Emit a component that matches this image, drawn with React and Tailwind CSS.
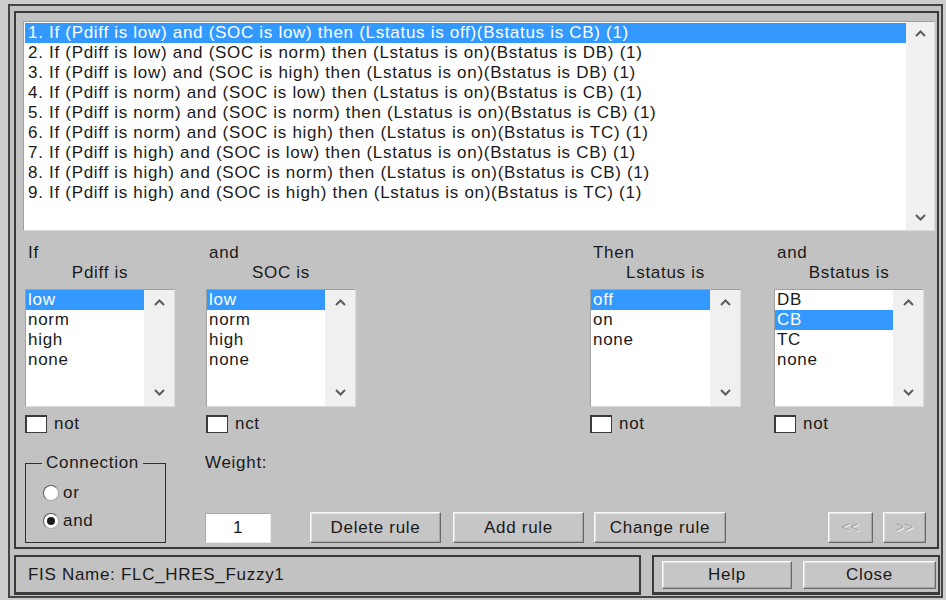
const rules = [
  '1. If (Pdiff is low) and (SOC is low) then (Lstatus is off)(Bstatus is CB) (1)',
  '2. If (Pdiff is low) and (SOC is norm) then (Lstatus is on)(Bstatus is DB) (1)',
  '3. If (Pdiff is low) and (SOC is high) then (Lstatus is on)(Bstatus is DB) (1)',
  '4. If (Pdiff is norm) and (SOC is low) then (Lstatus is on)(Bstatus is CB) (1)',
  '5. If (Pdiff is norm) and (SOC is norm) then (Lstatus is on)(Bstatus is CB) (1)',
  '6. If (Pdiff is norm) and (SOC is high) then (Lstatus is on)(Bstatus is TC) (1)',
  '7. If (Pdiff is high) and (SOC is low) then (Lstatus is on)(Bstatus is CB) (1)',
  '8. If (Pdiff is high) and (SOC is norm) then (Lstatus is on)(Bstatus is CB) (1)',
  '9. If (Pdiff is high) and (SOC is high) then (Lstatus is on)(Bstatus is TC) (1)',
];

function Chevron({ up }) {
  return (
    <svg width="11" height="7" viewBox="0 0 11 7" className="text-[#5c5c5c]">
      <polyline
        points={up ? '1,6 5.5,1.5 10,6' : '1,1 5.5,5.5 10,1'}
        fill="none"
        stroke="currentColor"
        strokeWidth="2"
      />
    </svg>
  );
}

function ScrollBar({ className = '' }) {
  return (
    <div className={`flex flex-col items-center justify-between bg-[#f0f0f0] ${className}`}>
      <Chevron up />
      <Chevron />
    </div>
  );
}

function Button({ children, className = '', disabled }) {
  return (
    <button
      className={`flex items-center justify-center bg-[#c6c6c6] border border-t-[#f8f8f8] border-l-[#f8f8f8] border-r-[#686868] border-b-[#686868] shadow-[inset_-1px_-1px_0_#a6a6a6,inset_1px_1px_0_#e2e2e2] ${
        disabled ? 'text-[14px] text-[#a4a4a4] [text-shadow:1px_1px_0_#f4f4f4]' : 'text-[#1a1a1a]'
      } ${className}`}
    >
      {children}
    </button>
  );
}

function VarColumn({ lead, name, items, selected, notLabel = 'not', className = '' }) {
  return (
    <div className={`flex flex-col w-[150px] ${className}`}>
      <div className="h-[20px] leading-[20px] pl-[3px]">{lead}</div>
      <div className="h-[20px] leading-[20px] text-center">{name}</div>
      <div className="mt-[6px] h-[118px] flex bg-white border border-[#a0a0a0] border-r-[#dcdcdc] border-b-[#dcdcdc]">
        <div className="flex-1">
          {items.map((it, i) => (
            <div
              key={it}
              className={`h-[20px] leading-[20px] pl-[2px] ${i === selected ? 'bg-[#3399ff] text-white' : ''}`}
            >
              {it}
            </div>
          ))}
        </div>
        <ScrollBar className="w-[30px] pt-[9px] pb-[10px]" />
      </div>
      <div className="mt-[8px] h-[18px] flex items-center">
        <span className="shrink-0 w-[22px] h-[18px] bg-white border border-[#3a3a3a] border-l-2 border-t-2" />
        <span className="ml-[7px] leading-[18px]">{notLabel}</span>
      </div>
    </div>
  );
}

function Radio({ checked, label, className = '' }) {
  return (
    <div className={`flex items-center h-[20px] ${className}`}>
      <span className="shrink-0 w-[16px] h-[16px] rounded-full bg-white border border-[#5e5e5e] border-r-[#aaaaaa] border-b-[#aaaaaa] flex items-center justify-center">
        {checked && <span className="w-[8px] h-[8px] rounded-full bg-[#1a1a1a]" />}
      </span>
      <span className="ml-[4px]">{label}</span>
    </div>
  );
}

export default function App() {
  return (
    <div
      className="w-[946px] h-[600px] overflow-hidden bg-[#cdcdcd] pl-[8px] pt-[4px] text-[17px] tracking-[0.7px] text-[#1a1a1a]"
      style={{ fontFamily: '"Liberation Sans", Arial, sans-serif' }}
    >
      <div className="w-[935px] h-[594px] bg-[#c2c2c2] border-2 border-[#454545] flex flex-col">
        {/* rule editor panel */}
        <div className="ml-[4px] mt-[5px] w-[925px] h-[538px] border-2 border-[#3a3a3a] flex flex-col">
          <div className="ml-[7px] mt-[8px] w-[912px] h-[210px] flex bg-white border border-[#a0a0a0] border-r-[#dcdcdc] border-b-[#dcdcdc]">
            <div className="flex-1 pl-[1px] pt-[1px]">
              {rules.map((r, i) => (
                <div
                  key={r}
                  className={`h-[20px] leading-[20px] pl-[3px] whitespace-nowrap ${i === 0 ? 'bg-[#3399ff] text-white' : ''}`}
                >
                  {r}
                </div>
              ))}
            </div>
            <ScrollBar className="w-[28px] pt-[8px] pb-[9px]" />
          </div>

          <div className="flex mt-[12px] ml-[9px]">
            <VarColumn lead="If" name="Pdiff is" items={['low', 'norm', 'high', 'none']} selected={0} />
            <VarColumn
              className="ml-[31px]"
              lead="and"
              name="SOC is"
              items={['low', 'norm', 'high', 'none']}
              selected={0}
              notLabel="nct"
            />
            <VarColumn className="ml-[234px] w-[151px]" lead="Then" name="Lstatus is" items={['off', 'on', 'none']} selected={0} />
            <VarColumn className="ml-[33px] w-[149px]" lead="and" name="Bstatus is" items={['DB', 'CB', 'TC', 'none']} selected={1} />
          </div>

          <div className="flex items-start mt-[20px] ml-[9px]">
            <fieldset className="w-[141px] h-[90px] border border-[#303030]">
              <legend className="ml-[16px] px-[4px] h-[20px] leading-[20px]">Connection</legend>
              <Radio className="mt-[10px] pl-[17px]" label="or" />
              <Radio className="mt-[8px] pl-[17px]" label="and" checked />
            </fieldset>

            <div className="ml-[39px] flex flex-col">
              <div className="h-[20px] leading-[20px]">Weight:</div>
              <div className="mt-[40px] w-[66px] h-[30px] bg-white border border-[#a8a8a8] border-r-[#e8e8e8] border-b-[#e8e8e8] flex items-center justify-center">
                1
              </div>
            </div>

            <div className="flex mt-[59px]">
              <Button className="ml-[39px] w-[131px] h-[31px]">Delete rule</Button>
              <Button className="ml-[12px] w-[131px] h-[31px]">Add rule</Button>
              <Button className="ml-[10px] w-[132px] h-[31px]">Change rule</Button>
              <Button disabled className="ml-[102px] w-[45px] h-[31px]">&lt;&lt;</Button>
              <Button disabled className="ml-[10px] w-[43px] h-[31px]">&gt;&gt;</Button>
            </div>
          </div>
        </div>

        {/* status strip */}
        <div className="flex ml-[4px] mt-[6px]">
          <div className="w-[627px] h-[40px] border-2 border-b-[3px] border-[#3a3a3a] pl-[12px] flex items-center">
            FIS Name: FLC_HRES_Fuzzy1
          </div>
          <div className="ml-[11px] w-[288px] h-[40px] border-2 border-b-[3px] border-[#3a3a3a] pl-[8px] pt-[4px] flex items-start">
            <Button className="w-[130px] h-[28px]">Help</Button>
            <Button className="ml-[11px] w-[133px] h-[28px]">Close</Button>
          </div>
        </div>
      </div>
    </div>
  );
}
